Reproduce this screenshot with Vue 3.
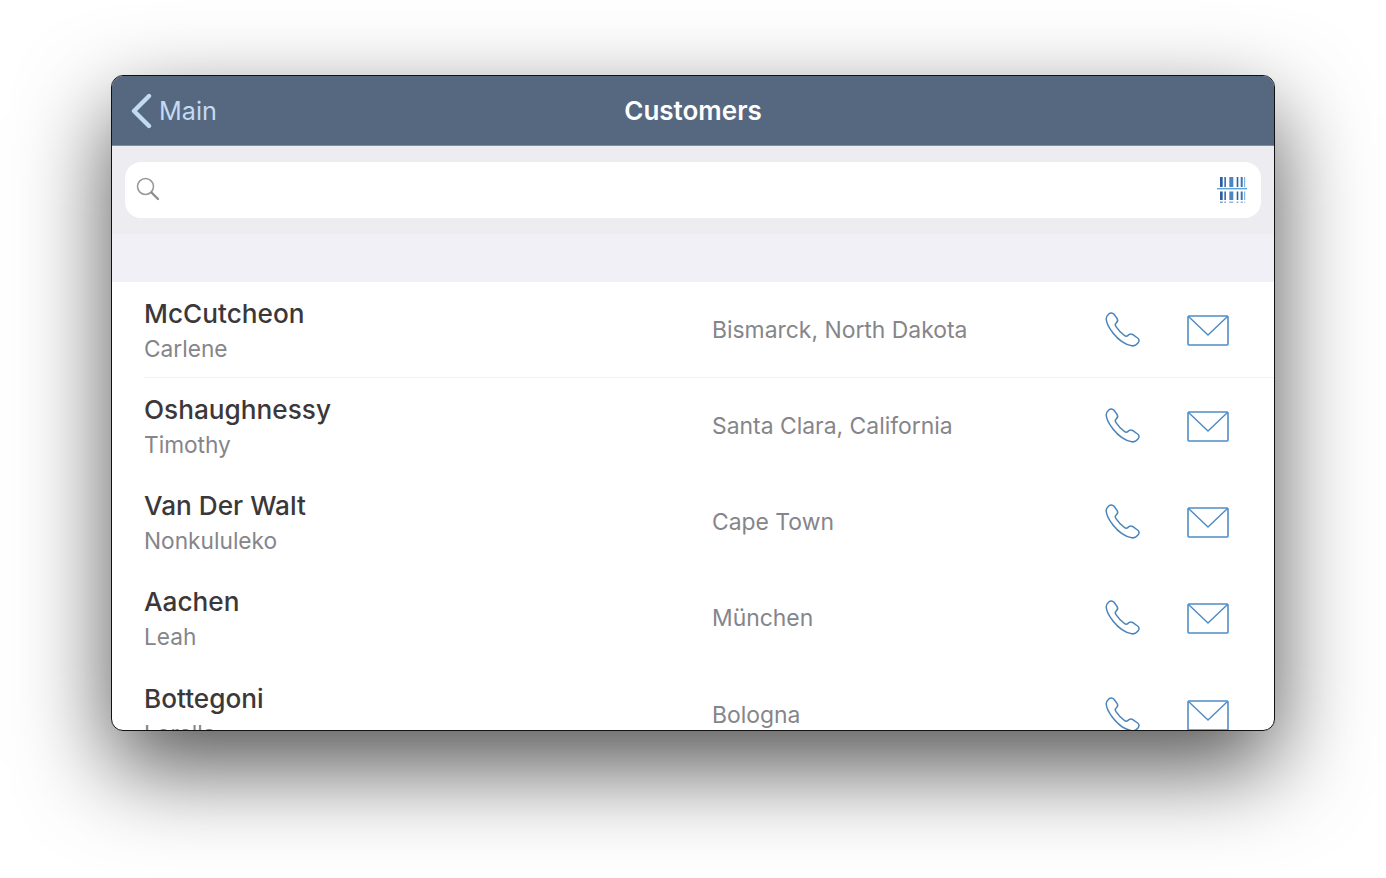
<template>
  <div class="page">
    <div class="window">
      <header class="navbar">
        <div class="back">
          <svg class="chevron" width="22" height="36" viewBox="0 0 22 36">
            <path d="M19 3 L4 18 L19 33" fill="none" stroke="#c3daf3" stroke-width="4.4" stroke-linecap="round" stroke-linejoin="round" />
          </svg>
          <span>Main</span>
        </div>
        <div class="title">Customers</div>
      </header>

      <div class="search-band">
        <div class="search-box">
          <svg class="lens" width="26" height="26" viewBox="0 0 26 26">
            <circle cx="10.5" cy="10.5" r="8" fill="none" stroke="#999" stroke-width="1.6" />
            <path d="M16.5 16.5 L23 23" stroke="#8f8f8f" stroke-width="2.4" stroke-linecap="round" />
          </svg>
          <svg class="barcode" width="30" height="28" viewBox="0 0 30 28">
            <g v-for="s in stripes" :key="s.y" :opacity="s.o">
              <rect v-for="b in bars" :key="b.x" :x="b.x" :y="s.y" :width="b.w" :height="s.h" :fill="b.c" />
            </g>
            <rect x="0" y="12" width="30" height="1.4" fill="#5ba4dc" />
          </svg>
        </div>
      </div>
      <div class="section-gap"></div>

      <div class="list">
        <div v-for="(c, i) in customers" :key="c.last" class="row">
          <div class="row-inner" :class="{ divided: i === 0 }">
            <div class="names">
              <div class="last">{{ c.last }}</div>
              <div class="first">{{ c.first }}</div>
            </div>
            <div class="place">{{ c.place }}</div>
            <svg class="phone" width="38" height="38" viewBox="0 0 38 38">
              <path d="M4.5 3.2 C6.5 1.4 8.6 1.6 10 3.2 L13 7.4 C14.2 9.2 13.8 10.6 12.2 12 C11 13 11 14.2 12 15.6 C14.2 18.8 17.6 22.6 20.6 24.6 C22 25.6 23 25.4 24 24.4 C25.6 22.8 27 22.4 28.8 23.6 L33.6 27 C35.4 28.4 35.4 30.2 34 32 C32.4 34 30.4 35.2 27.8 34.8 C21 33.6 14 28.4 9 22 C5 16.8 2.4 11.6 2.2 8 C2.1 6 3 4.6 4.5 3.2 Z" fill="none" stroke="#4b84bb" stroke-width="1.5" stroke-linejoin="round" />
            </svg>
            <svg class="mail" width="42" height="32" viewBox="0 0 42 32">
              <rect x="1" y="1" width="40" height="29" rx="1" fill="none" stroke="#4f8cc6" stroke-width="1.6" />
              <path d="M1.5 1.5 L21 20 L40.5 1.5" fill="none" stroke="#4f8cc6" stroke-width="1.4" />
            </svg>
          </div>
        </div>
      </div>
    </div>
  </div>
</template>

<script setup>
const customers = [
  { last: 'McCutcheon', first: 'Carlene', place: 'Bismarck, North Dakota' },
  { last: 'Oshaughnessy', first: 'Timothy', place: 'Santa Clara, California' },
  { last: 'Van Der Walt', first: 'Nonkululeko', place: 'Cape Town' },
  { last: 'Aachen', first: 'Leah', place: 'München' },
  { last: 'Bottegoni', first: 'Lorella', place: 'Bologna' }
]

// barcode stripes, same bars repeated above and below the scan line
const stripes = [
  { y: 1, h: 10, o: 1 },
  { y: 15.5, h: 8.5, o: 1 },
  { y: 25.5, h: 1.5, o: 0.6 }
]
const bars = [
  { x: 3, w: 2.7, c: '#2f5f9e' },
  { x: 7.3, w: 1.7, c: '#3f74b4' },
  { x: 12.3, w: 4, c: '#4c86c4' },
  { x: 19.7, w: 1.6, c: '#2f5f9e' },
  { x: 23.7, w: 2, c: '#3f74b4' },
  { x: 27, w: 1.2, c: '#7fb6e6' }
]
</script>

<style>
html, body {
  margin: 0;
  background: #fff;
  overflow: hidden;
}
</style>

<style scoped>
.page {
  width: 1386px;
  height: 878px;
  padding: 75px 0 0 111px;
  box-sizing: border-box;
  font-family: Inter, "Noto Sans", sans-serif;
}
.window {
  width: 1164px;
  height: 656px;
  box-sizing: border-box;
  border: 1px solid #111;
  border-radius: 12px;
  overflow: hidden;
  background: #fff;
  box-shadow: 0 36px 92px 0 rgba(0, 0, 0, 0.68);
}
.navbar {
  height: 70px;
  background: #56687f;
  border-bottom: 1px solid #7d8ca0;
  box-sizing: border-box;
  display: grid;
  grid-template-columns: 1fr auto 1fr;
  align-items: center;
  padding: 0 18px;
}
.back {
  display: flex;
  align-items: center;
  gap: 7px;
  color: #c3daf3;
  font-size: 25.2px;
  font-weight: 400;
}
.chevron {
  flex: none;
}
.title {
  color: #fff;
  font-size: 26px;
  font-weight: 600;
}
.search-band {
  height: 88px;
  background: #ececf1;
  padding: 16px 13px;
  box-sizing: border-box;
}
.search-box {
  height: 56px;
  background: #fff;
  border-radius: 16px;
  display: flex;
  align-items: center;
  justify-content: space-between;
  padding: 0 14px 0 10px;
}
.lens {
  margin-bottom: 2px;
}
.section-gap {
  height: 48px;
  background: #f0f0f6;
}
.row {
  height: 96.25px;
  padding-left: 32px;
  box-sizing: border-box;
}
.row-inner {
  height: 100%;
  box-sizing: border-box;
  display: flex;
  align-items: center;
  padding-right: 45px;
  border-bottom: 1px solid transparent;
}
.row-inner.divided {
  border-bottom-color: #f1f1f3;
}
.names {
  width: 568px;
  flex: none;
  padding-top: 3px;
}
.last {
  font-size: 26.2px;
  font-weight: 500;
  color: #3c383a;
  line-height: 32px;
}
.first {
  font-size: 22.7px;
  color: #85858a;
  line-height: 32px;
  margin-top: 3px;
}
.place {
  flex: 1;
  font-size: 22.9px;
  color: #85858a;
}
.phone {
  margin-left: 1px;
  margin-right: 45px;
}
.mail {
  margin-top: 2px;
}
</style>
